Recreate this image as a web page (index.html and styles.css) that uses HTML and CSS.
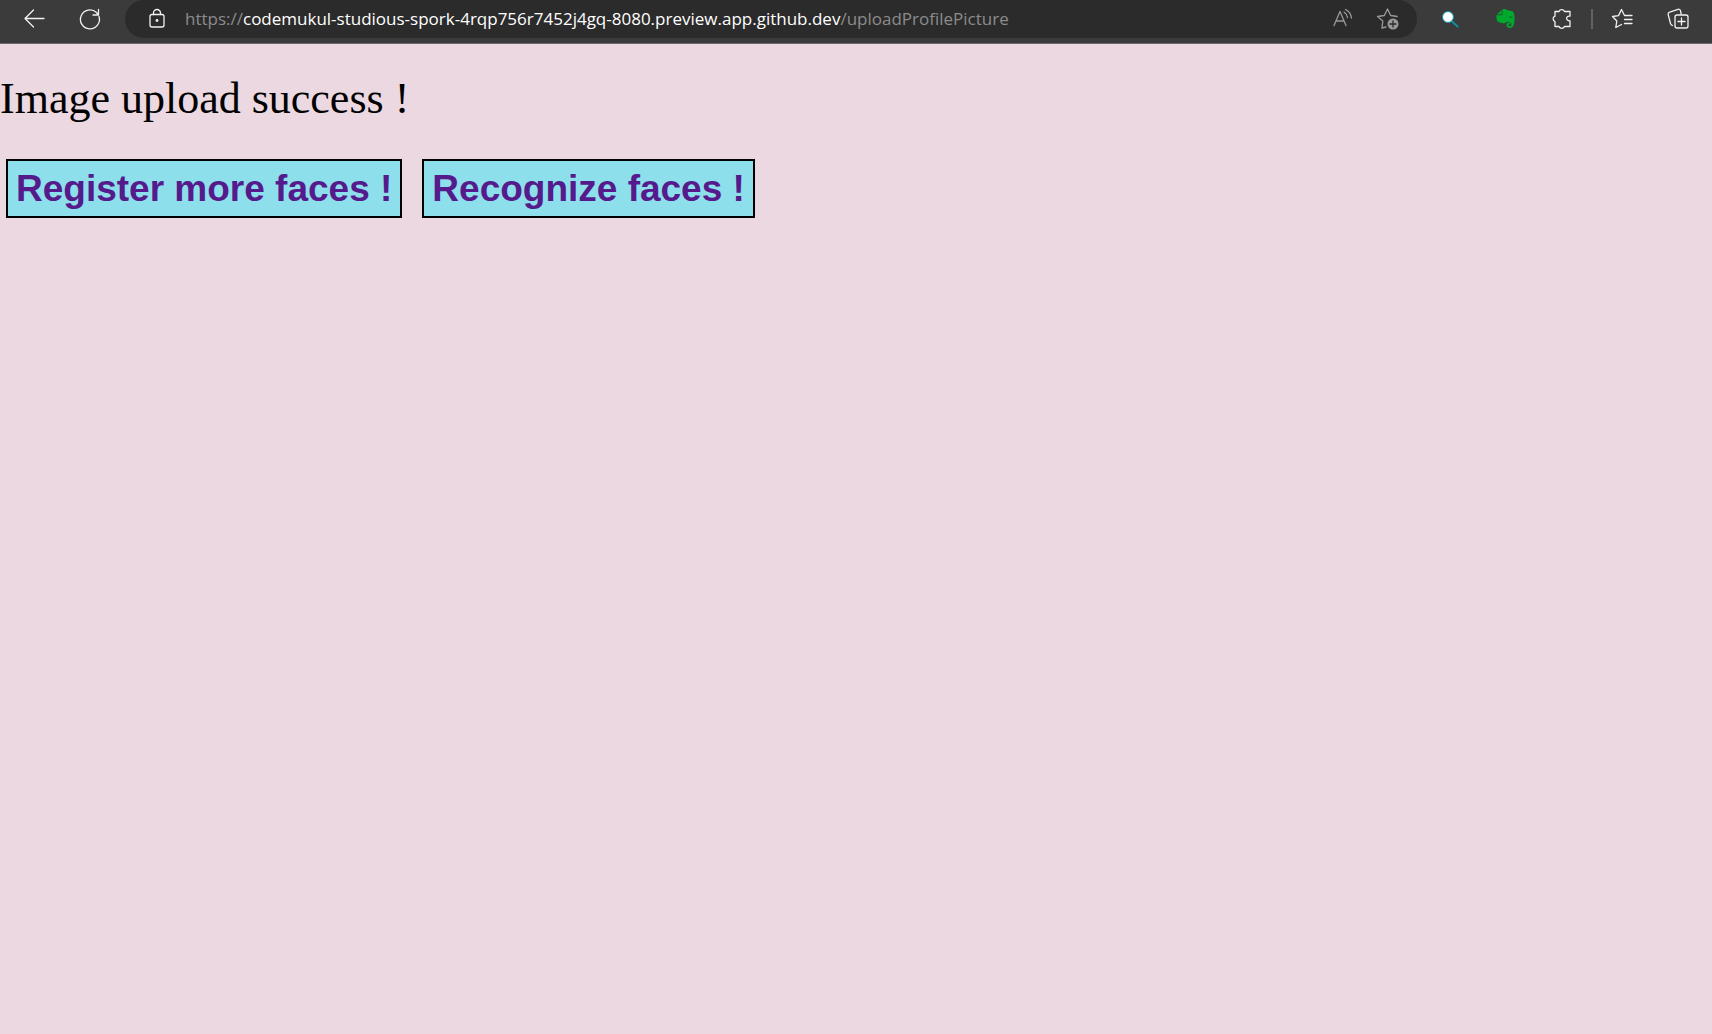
FILE: index.html
```html
<!DOCTYPE html>
<html lang="en">
<head>
<meta charset="utf-8">
<title>Upload profile picture</title>
<link rel="stylesheet" href="styles.css">
</head>
<body>
<header class="toolbar">
  <nav class="group" aria-label="Navigation">
    <button class="icon-btn" type="button" aria-label="Back"><svg viewBox="0 0 24 24"><path d="M22 11.500H3M11.500 3L3 11.500l8.500 8.500"/></svg></button>
    <button class="icon-btn" type="button" aria-label="Refresh"><svg viewBox="0 0 24 24"><path d="M21 9.500A9.500 9.500 0 1 1 18.500 5.500L20.500 8M20.500 2.500V8H15"/></svg></button>
  </nav>
  <div class="address">
    <button class="icon-btn" type="button" aria-label="Site information"><svg viewBox="0 0 24 24"><rect x="5" y="7.500" width="14" height="12.500" rx="2"/><path d="M8.500 7.500V6a3.500 3.500 0 0 1 7 0v1.500"/><circle class="solid" cx="12" cy="13.500" r="1.400"/></svg></button>
    <div class="url" role="textbox" contenteditable="true" spellcheck="false" aria-label="Address">https://<span class="host">codemukul-studious-spork-4rqp756r7452j4gq-8080.preview.app.github.dev</span>/uploadProfilePicture</div>
    <div class="actions">
      <button class="icon-btn dim" type="button" aria-label="Read aloud"><svg viewBox="0 0 24 24"><path d="M3 18.500L9 4.500l6 14M5.200 14h7.600M13 5a8 8 0 0 1 3.500 5.500M14.500 2.500A11 11 0 0 1 20.500 11"/></svg></button>
      <button class="icon-btn dim" type="button" aria-label="Add to favorites"><svg viewBox="0 0 24 24"><path d="M10 20l-4 1 .8-7L1.500 9.500l6.800-1L11.500 2l3.200 6.500 6.500 1"/><circle class="solid" cx="17" cy="17" r="5.500"/><path class="cut" d="M17 14v6M14 17h6"/></svg></button>
    </div>
  </div>
  <div class="tools">
    <div class="group">
      <button class="icon-btn" type="button" aria-label="Search extension"><svg viewBox="0 0 24 24"><path class="handle" d="M13.500 14l6 5.500"/><circle class="lens" cx="10" cy="10" r="5.500"/></svg></button>
      <button class="icon-btn" type="button" aria-label="Evernote"><svg viewBox="0 0 24 24"><path class="leaf" d="M3 7.500L8 2.500c2-1 4-.8 5 .8 3 .2 6.500.5 7 3 .8 4 .8 8.500-.3 12-.7 2.200-3.200 3-5.200 2.500-2-.6-2.500-2.800-1.500-4.200.8-1 2.500-1.300 3.500-.7v1.500c-1.200-.4-2 .1-2 .9 0 1 2 1.200 2.700.2.600-1 .2-3-1.200-3.300l-3-.6c-.5 1.500-1.800 1.700-3.500 1.600C5 16 3 15 2.500 11.500 2.300 9.500 2.300 8.500 3 7.500z"/><path class="fold" d="M3.500 7.800H8V3M15.500 10.500c.2-1.500 2.300-1.300 2.500.3"/></svg></button>
      <button class="icon-btn" type="button" aria-label="Extensions"><svg viewBox="0 0 24 24"><path d="M5 4.500h4a3 3 0 0 1 5.500 0H20v4.700c-4-1-5 4.600 0 4.600v5.700h-5.500a3 3 0 0 1-5.500 0H5v-5a2.800 2.800 0 0 1 0-5.300z"/></svg></button>
    </div>
    <span class="divider"></span>
    <div class="group">
      <button class="icon-btn" type="button" aria-label="Favorites"><svg viewBox="0 0 24 24"><path d="M11.500 17.500l-5.700 3 1-6.500-4.300-4.500 6-.9L11.500 2.500l3 6M14.500 8.500H22M14.500 12.500H22M14.500 16.500H22"/></svg></button>
      <button class="icon-btn" type="button" aria-label="Collections"><svg viewBox="0 0 24 24"><path d="M6.500 18.500a3 3 0 0 1-2-2L2.200 7.600a2 2 0 0 1 1.500-2.500L12 2.300a2 2 0 0 1 2.500 1.500L15.200 7"/><rect x="9" y="8" width="13" height="13" rx="2"/><path d="M15.500 11v7M12 14.500h7"/></svg></button>
    </div>
  </div>
</header>
<main>
  <p class="message">Image upload success !</p>
  <div class="links">
    <a class="link" href="#register">Register more faces !</a>
    <a class="link" href="#recognize">Recognize faces !</a>
  </div>
</main>
</body>
</html>
```
FILE: styles.css
```css
* { box-sizing: border-box; }

body {
  margin: 0;
  background: #ebd8e0;
  color: #000;
  font-family: "Liberation Serif", "Times New Roman", serif;
}

.toolbar {
  display: flex;
  align-items: flex-start;
  height: 44px;
  padding: 0 22px;
  background: #3b3b3b;
  border-bottom: 1px solid #6b676a;
}

.group,
.tools,
.address,
.actions {
  display: flex;
  align-items: center;
  height: 38px;
}

.group { gap: 32px; }

.tools { gap: 17px; }

.address {
  flex: 1;
  min-width: 0;
  margin: 0 21px 0 23px;
  padding: 0 17px 0 20px;
  background: #2b2b2b;
  border-radius: 19px;
}

.actions { gap: 21px; }

.url {
  flex: 1;
  min-width: 0;
  margin-left: 16px;
  overflow: hidden;
  white-space: nowrap;
  color: #8b8b8b;
  font: 17px/24px "Open Sans", sans-serif;
}

.host { color: #fff; }

.icon-btn {
  flex: none;
  width: 24px;
  height: 24px;
  padding: 0;
  border: 0;
  background: none;
  color: #f2f2f2;
}

.dim { color: #9a9a9a; }

.icon-btn svg {
  display: block;
  width: 24px;
  height: 24px;
  fill: none;
  stroke: currentColor;
  stroke-width: 1.3;
  stroke-linecap: round;
  stroke-linejoin: round;
}

.icon-btn .solid { fill: currentColor; stroke: none; }
.icon-btn .cut { stroke: #2b2b2b; }
.icon-btn .handle { stroke: #0e8fa3; stroke-width: 2; }
.icon-btn .lens { fill: #fff; stroke: #0e8fa3; stroke-width: 1; }
.icon-btn .leaf { fill: #00a82d; stroke: none; }
.icon-btn .fold { stroke: #26592f; stroke-width: 1; }

.divider {
  width: 2px;
  height: 20px;
  background: #616161;
}

.message {
  margin: 29px 0 34px;
  font-size: 44px;
  line-height: 52px;
}

.links {
  display: flex;
  flex-wrap: wrap;
  gap: 20px;
  padding: 0 6px;
}

.link {
  padding: 6px 8px;
  border: 2px solid #000;
  background: #8de0eb;
  color: #551a8b;
  font: bold 37px/43px "Liberation Sans", Arial, sans-serif;
  text-decoration: none;
}
```
